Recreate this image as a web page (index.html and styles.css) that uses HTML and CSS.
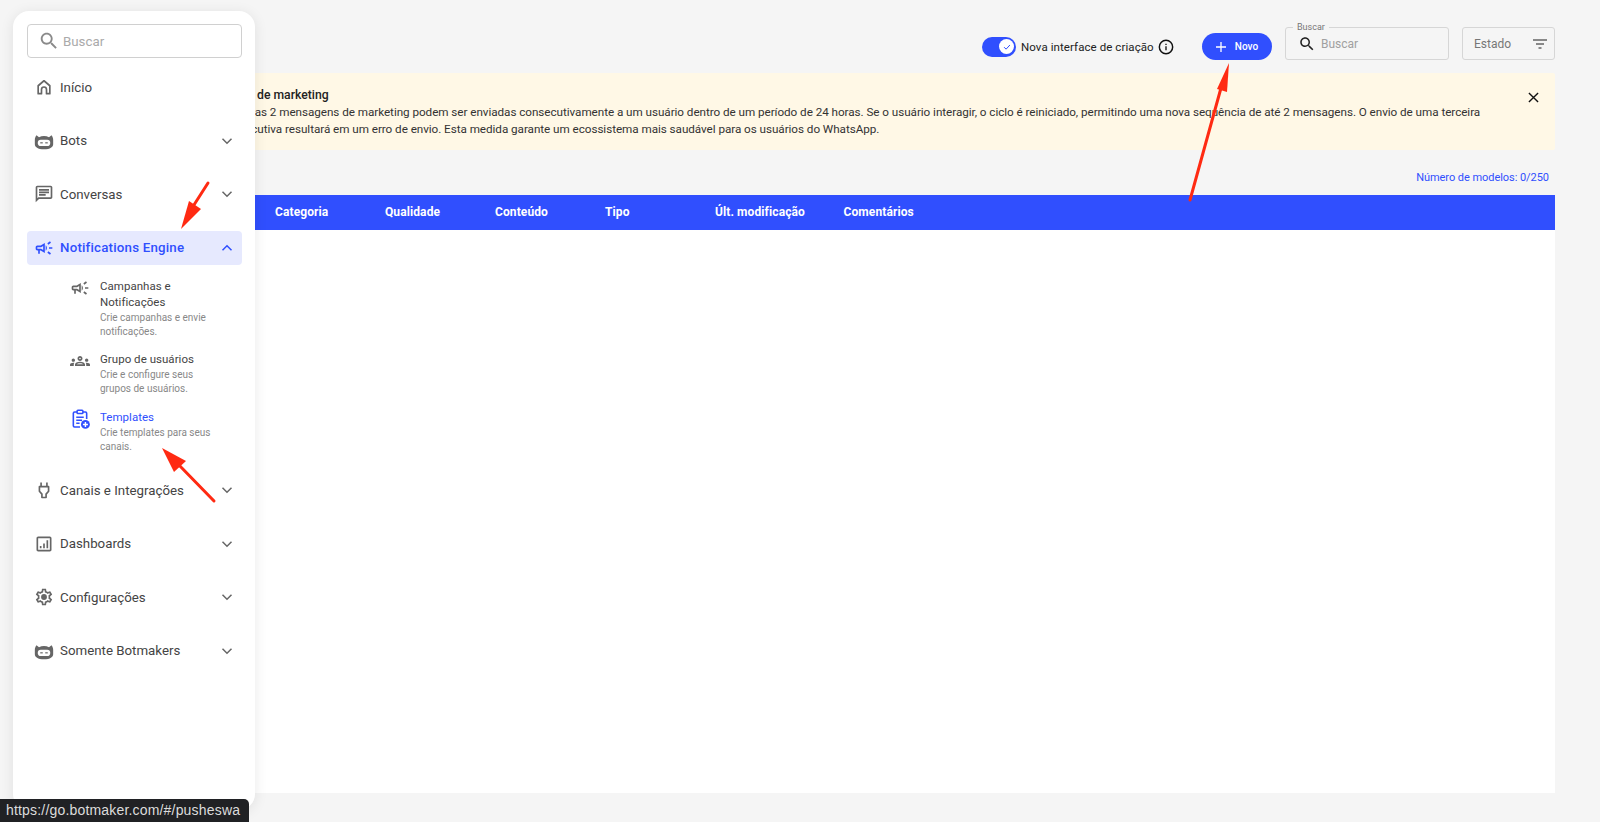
FILE: index.html
```html
<!DOCTYPE html>
<html lang="pt">
<head>
<meta charset="utf-8">
<title>Templates</title>
<link rel="stylesheet" href="styles.css">
</head>
<body>
<svg class="sprite" width="0" height="0" aria-hidden="true">
  <symbol id="i-bot" viewBox="0 0 24 24"><path d="M3 5l3 2.400C7.800 6.500 9.800 6 12 6s4.200.5 6 1.400L21 5c1.300 1.500 2 3.500 2 5.500V16c0 3.500-3.500 6-11 6S1 19.500 1 16v-5.500C1 8.500 1.700 6.500 3 5z" fill="currentColor"/><rect x="4.500" y="10.500" width="15" height="7.500" rx="3.700" fill="#fff"/><rect x="7.500" y="13.500" width="3" height="1.400" fill="currentColor"/><rect x="13.500" y="13.500" width="3" height="1.400" fill="currentColor"/></symbol>
  <symbol id="i-campaign" viewBox="0 0 24 24"><path fill="currentColor" d="M18 11v2h4v-2h-4zm-2 6.610c.96.71 2.210 1.650 3.200 2.390.4-.53.8-1.070 1.200-1.600-.99-.74-2.240-1.680-3.200-2.400-.4.54-.8 1.080-1.200 1.610zM20.400 5.600c-.4-.53-.8-1.070-1.200-1.600-.99.74-2.240 1.680-3.200 2.400.4.53.8 1.070 1.200 1.600.96-.72 2.210-1.650 3.200-2.400zM4 9c-1.100 0-2 .9-2 2v2c0 1.100.9 2 2 2h1v4h2v-4h1l5 3V6L8 9H4zm5.030 1.710L11 9.530v4.940l-1.970-1.180-.48-.29H4v-2h4.550l.48-.29zM15.500 12c0-1.330-.58-2.530-1.500-3.350v6.690c.92-.81 1.500-2.010 1.500-3.340z"/></symbol>
  <symbol id="i-chev" viewBox="0 0 24 24"><path d="M6 9l6 6 6-6" fill="none" stroke="currentColor" stroke-width="2"/></symbol>
  <symbol id="i-search" viewBox="0 0 24 24"><path fill="currentColor" d="M15.500 14h-.79l-.28-.27C15.410 12.590 16 11.110 16 9.500 16 5.910 13.090 3 9.500 3S3 5.910 3 9.500 5.910 16 9.500 16c1.610 0 3.090-.59 4.230-1.570l.27.28v.79l5 4.990L20.490 19l-4.990-5zm-6 0C7.010 14 5 11.990 5 9.500S7.010 5 9.500 5 14 7.010 14 9.500 11.990 14 9.500 14z"/></symbol>
</svg>

<div class="page">
  <main class="main">
    <div class="toolbar">
      <div class="toggle-group">
        <span class="toggle"><span class="knob"><svg viewBox="0 0 12 12" width="10" height="10"><path d="M2.500 6.200l2.400 2.400 4.600-5" fill="none" stroke="#304ffe" stroke-width="1.200"/></svg></span></span>
        <span class="toggle-label">Nova interface de criação</span>
        <svg class="info" viewBox="0 0 24 24" width="16" height="16"><circle cx="12" cy="12" r="10" fill="none" stroke="#111" stroke-width="2.200"/><path d="M11 11h2v6h-2zM11 7h2v2h-2z" fill="#111"/></svg>
      </div>
      <button class="btn-new"><svg viewBox="0 0 12 12" width="12" height="12"><path d="M6 1v10M1 6h10" stroke="#fff" stroke-width="1.300"/></svg><span>Novo</span></button>
      <div class="search-field">
        <span class="field-label">Buscar</span>
        <svg width="18" height="18" class="search-icon"><use href="#i-search"/></svg>
        <span class="field-ph">Buscar</span>
      </div>
      <div class="state-field">
        <span>Estado</span>
        <svg viewBox="0 0 16 12" width="16" height="12"><path d="M1 2h14M4 6h8M6.500 10h3" stroke="#666" stroke-width="1.300"/></svg>
      </div>
    </div>

    <section class="banner">
      <div class="banner-text">
        <strong>Limite de marketing</strong>
        <p>Todas as 2 mensagens de marketing podem ser enviadas consecutivamente a um usuário dentro de um período de 24 horas. Se o usuário interagir, o ciclo é reiniciado, permitindo uma nova sequência de até 2 mensagens. O envio de uma terceira<br>consecutiva resultará em um erro de envio. Esta medida garante um ecossistema mais saudável para os usuários do WhatsApp.</p>
      </div>
      <svg class="close" viewBox="0 0 12 12" width="11" height="11"><path d="M1 1l10 10M11 1L1 11" stroke="#111" stroke-width="1.500"/></svg>
    </section>

    <div class="count">Número de modelos: 0/250</div>

    <section class="table">
      <div class="thead">
        <span class="col">Categoria</span>
        <span class="col">Qualidade</span>
        <span class="col">Conteúdo</span>
        <span class="col">Tipo</span>
        <span class="col col-wide">Últ. modificação</span>
        <span class="col">Comentários</span>
      </div>
    </section>
  </main>
</div>

<aside class="sidebar">
  <div class="side-search">
    <svg width="22" height="22"><use href="#i-search"/></svg>
    <span>Buscar</span>
  </div>
  <nav class="nav">
    <a class="item">
      <svg class="ico" viewBox="0 0 24 24"><path d="M5 10.500L12 4.500l7 6V20H15v-5a3 3 0 0 0-6 0v5H5z" fill="none" stroke="currentColor" stroke-width="2" stroke-linejoin="round"/></svg>
      <span class="label">Início</span>
    </a>
    <a class="item">
      <svg class="ico"><use href="#i-bot"/></svg>
      <span class="label">Bots</span>
      <svg class="chev"><use href="#i-chev"/></svg>
    </a>
    <a class="item">
      <svg class="ico" viewBox="0 0 24 24"><path fill="currentColor" d="M4 4h16v12H5.170L4 17.170V4m0-2c-1.100 0-1.990.9-1.990 2L2 22l4-4h14c1.100 0 2-.9 2-2V4c0-1.100-.9-2-2-2H4zm2 10h8v2H6v-2zm0-3h12v2H6V9zm0-3h12v2H6V6z"/></svg>
      <span class="label">Conversas</span>
      <svg class="chev"><use href="#i-chev"/></svg>
    </a>
    <div class="group">
      <a class="item active">
        <svg class="ico"><use href="#i-campaign"/></svg>
        <span class="label">Notifications Engine</span>
        <svg class="chev up"><use href="#i-chev"/></svg>
      </a>
      <div class="sub">
        <a class="sub-item">
          <svg class="sub-ico"><use href="#i-campaign"/></svg>
          <div class="sub-text">
            <div class="sub-title">Campanhas e Notificações</div>
            <div class="sub-desc">Crie campanhas e envie notificações.</div>
          </div>
        </a>
        <a class="sub-item">
          <svg class="sub-ico" viewBox="0 0 24 24"><path fill="currentColor" d="M4 13c1.100 0 2-.9 2-2s-.9-2-2-2-2 .9-2 2 .9 2 2 2zm1.130 1.100c-.37-.06-.74-.1-1.130-.1-.99 0-1.930.21-2.780.58C.48 14.900 0 15.620 0 16.430V18h4.500v-1.610c0-.83.23-1.610.63-2.290zM20 13c1.100 0 2-.9 2-2s-.9-2-2-2-2 .9-2 2 .9 2 2 2zm4 3.430c0-.81-.48-1.530-1.220-1.850-.85-.37-1.790-.58-2.780-.58-.39 0-.76.04-1.130.1.4.68.63 1.460.63 2.290V18H24v-1.570zm-7.760-2.780c-1.170-.52-2.610-.9-4.240-.9-1.630 0-3.070.39-4.240.9C6.680 14.130 6 15.210 6 16.390V18h12v-1.610c0-1.180-.68-2.260-1.760-2.740zM8.070 16c.09-.23.13-.39.91-.69.97-.38 1.990-.56 3.020-.56s2.050.18 3.020.56c.77.3.81.46.91.69H8.070zM12 8c.55 0 1 .45 1 1s-.45 1-1 1-1-.45-1-1 .45-1 1-1m0-2c-1.660 0-3 1.340-3 3s1.340 3 3 3 3-1.340 3-3-1.340-3-3-3z"/></svg>
          <div class="sub-text">
            <div class="sub-title">Grupo de usuários</div>
            <div class="sub-desc">Crie e configure seus grupos de usuários.</div>
          </div>
        </a>
        <a class="sub-item sub-active">
          <svg class="sub-ico" viewBox="0 0 24 24"><path d="M9 3.500H5.500A1.500 1.500 0 0 0 4 5v15a1.500 1.500 0 0 0 1.500 1.500H12M15 3.500h3.500A1.500 1.500 0 0 1 20 5v7" fill="none" stroke="currentColor" stroke-width="1.900"/><rect x="8.500" y="1.500" width="7" height="4" rx="1" fill="none" stroke="currentColor" stroke-width="1.800"/><path d="M7.500 10h9M7.500 13.500h7M7.500 17h4" stroke="currentColor" stroke-width="1.800"/><circle cx="18.500" cy="18.500" r="5.300" fill="currentColor"/><path d="M18.500 15.500v6M15.500 18.500h6" stroke="#fff" stroke-width="1.700"/></svg>
          <div class="sub-text">
            <div class="sub-title">Templates</div>
            <div class="sub-desc">Crie templates para seus canais.</div>
          </div>
        </a>
      </div>
    </div>
    <a class="item">
      <svg class="ico" viewBox="0 0 24 24"><path d="M8.500 3v5M15.500 3v5M6.500 8h11v5.500L14.500 17v4h-5v-4l-3-3.500z" fill="none" stroke="currentColor" stroke-width="2" stroke-linejoin="round"/></svg>
      <span class="label">Canais e Integrações</span>
      <svg class="chev"><use href="#i-chev"/></svg>
    </a>
    <a class="item">
      <svg class="ico" viewBox="0 0 24 24"><path fill="currentColor" d="M19 3H5c-1.100 0-2 .9-2 2v14c0 1.100.9 2 2 2h14c1.100 0 2-.9 2-2V5c0-1.100-.9-2-2-2zm0 16H5V5h14v14zM7 14.500h2V17H7zm4-3h2V17h-2zm4-4h2V17h-2z"/></svg>
      <span class="label">Dashboards</span>
      <svg class="chev"><use href="#i-chev"/></svg>
    </a>
    <a class="item">
      <svg class="ico" viewBox="0 0 24 24"><path fill="currentColor" d="M19.430 12.980c.04-.32.07-.64.07-.98 0-.34-.03-.66-.07-.98l2.110-1.650c.19-.15.24-.42.12-.64l-2-3.460c-.09-.16-.26-.25-.44-.25-.06 0-.12.01-.17.03l-2.490 1c-.52-.4-1.080-.73-1.690-.98l-.38-2.650C14.460 2.180 14.250 2 14 2h-4c-.25 0-.46.18-.49.42l-.38 2.650c-.61.25-1.170.59-1.690.98l-2.490-1c-.06-.02-.12-.03-.18-.03-.17 0-.34.09-.43.25l-2 3.460c-.13.22-.07.49.12.64l2.110 1.650c-.04.32-.07.65-.07.98 0 .33.03.66.07.98l-2.110 1.650c-.19.15-.24.42-.12.64l2 3.460c.09.16.26.25.44.25.06 0 .12-.01.17-.03l2.490-1c.52.4 1.080.73 1.690.98l.38 2.650c.03.24.24.42.49.42h4c.25 0 .46-.18.49-.42l.38-2.650c.61-.25 1.170-.59 1.690-.98l2.490 1c.06.02.12.03.18.03.17 0 .34-.09.43-.25l2-3.460c.12-.22.07-.49-.12-.64l-2.110-1.650zm-1.980-1.710c.04.31.05.52.05.73 0 .21-.02.43-.05.73l-.14 1.130.89.7 1.080.84-.7 1.210-1.270-.51-1.040-.42-.9.68c-.43.32-.84.56-1.250.73l-1.060.43-.16 1.130-.2 1.350h-1.400l-.19-1.350-.16-1.130-1.060-.43c-.43-.18-.83-.41-1.230-.71l-.91-.7-1.060.43-1.270.51-.7-1.210 1.080-.84.89-.7-.14-1.130c-.03-.31-.05-.54-.05-.74s.02-.43.05-.73l.14-1.130-.89-.7-1.080-.84.7-1.210 1.270.51 1.040.42.9-.68c.43-.32.84-.56 1.250-.73l1.060-.43.16-1.130.2-1.350h1.390l.19 1.350.16 1.130 1.060.43c.43.18.83.41 1.230.71l.91.7 1.060-.43 1.270-.51.7 1.210-1.070.85-.89.7.14 1.130z"/><circle cx="12" cy="12" r="3.500" fill="currentColor"/></svg>
      <span class="label">Configurações</span>
      <svg class="chev"><use href="#i-chev"/></svg>
    </a>
    <a class="item">
      <svg class="ico"><use href="#i-bot"/></svg>
      <span class="label">Somente Botmakers</span>
      <svg class="chev"><use href="#i-chev"/></svg>
    </a>
  </nav>
</aside>

<div class="status-url">https://go.botmaker.com/#/pusheswa</div>

<svg class="arrows" viewBox="0 0 1600 822" width="1600" height="822" aria-hidden="true">
  <path d="M208 183L192 208" stroke="#ff2a12" stroke-width="3" stroke-linecap="round"/>
  <path d="M181 229L189 201L201 209z" fill="#ff2a12"/>
  <path d="M214 501L178 464" stroke="#ff2a12" stroke-width="3" stroke-linecap="round"/>
  <path d="M162 448L186 461L174 472z" fill="#ff2a12"/>
  <path d="M1190 200L1221 88" stroke="#ff2a12" stroke-width="3" stroke-linecap="round"/>
  <path d="M1229 63L1227 92L1217 89z" fill="#ff2a12"/>
</svg>
</body>
</html>
```

FILE: styles.css
```css
* { box-sizing: border-box; }

html, body {
  margin: 0;
  height: 822px;
  overflow: hidden;
  background: #f5f5f5;
  font-family: Roboto, "Liberation Sans", sans-serif;
  color: #333;
}

.sprite { position: absolute; }

.page {
  height: 822px;
  padding: 27px 45px 29px 64px;
}

.main {
  height: 100%;
  display: flex;
  flex-direction: column;
}

/* toolbar */
.toolbar {
  display: flex;
  align-items: flex-end;
  justify-content: flex-end;
  height: 33px;
  flex: none;
}

.toggle-group {
  height: 27px;
  display: flex;
  align-items: center;
}

.toggle {
  width: 34px;
  height: 20px;
  border-radius: 10px;
  background: #304ffe;
  display: flex;
  align-items: center;
  justify-content: flex-end;
  padding-right: 2px;
}

.knob {
  width: 15px;
  height: 15px;
  border-radius: 50%;
  background: #fff;
  display: flex;
  align-items: center;
  justify-content: center;
}

.toggle-label {
  margin-left: 5px;
  font-size: 11.500px;
  letter-spacing: .08px;
  color: #222;
  width: 132px;
  white-space: nowrap;
}

.info { margin-left: 5px; flex: none; }

.btn-new {
  margin-left: 28px;
  width: 70px;
  height: 27px;
  border: 0;
  border-radius: 14px;
  background: #304ffe;
  color: #fff;
  font: 500 10px Roboto, sans-serif;
  display: flex;
  align-items: center;
  justify-content: center;
  gap: 8px;
  padding: 0 1px 0 0;
}

.search-field {
  position: relative;
  margin-left: 13px;
  width: 164px;
  height: 33px;
  border: 1px solid #d6d6d6;
  border-radius: 3px;
  display: flex;
  align-items: center;
  padding-left: 12px;
  gap: 5px;
}

.field-label {
  position: absolute;
  left: 7px;
  top: -5px;
  padding: 0 4px;
  background: #f5f5f5;
  font-size: 9px;
  line-height: 9px;
  color: #777;
}

.search-icon { color: #222; flex: none; }

.field-ph {
  font-size: 12px;
  color: #a0a0a0;
}

.state-field {
  margin-left: 13px;
  width: 93px;
  height: 33px;
  border: 1px solid #d6d6d6;
  border-radius: 3px;
  display: flex;
  align-items: center;
  justify-content: space-between;
  padding: 0 6px 0 11px;
  font-size: 12px;
  color: #777;
}

/* banner */
.banner {
  flex: none;
  margin-top: 13px;
  height: 77px;
  background: #fff8e6;
  border-radius: 2px;
  padding: 14px 16px 0 156px;
  display: flex;
  align-items: flex-start;
}

.banner-text {
  flex: 1;
  font-size: 11.700px;
  line-height: 17px;
  letter-spacing: -.045px;
  color: #333;
  white-space: nowrap;
}

.banner-text strong {
  display: block;
  font-size: 12.200px;
  font-weight: 500;
  letter-spacing: 0;
  color: #222;
}

.banner-text p { margin: 0; }

.close { margin: 5px 0 0 0; flex: none; }

.count {
  flex: none;
  height: 45px;
  padding: 21px 6px 0 0;
  text-align: right;
  font-size: 11px;
  line-height: 14px;
  letter-spacing: -.05px;
  color: #304ffe;
}

/* table */
.table {
  flex: 1;
  background: #fff;
}

.thead {
  height: 35px;
  background: #304ffe;
  padding: 0 0 2px 211px;
  display: flex;
  align-items: center;
  color: #fff;
  font-size: 12px;
  letter-spacing: .1px;
  font-weight: 700;
}

.col { width: 110px; flex: none; }
.col-wide { width: 128.500px; }

/* sidebar */
.sidebar {
  position: absolute;
  left: 13px;
  top: 11px;
  width: 242px;
  height: 799px;
  background: #fff;
  border-radius: 16px;
  box-shadow: 0 2px 14px rgba(0, 0, 0, .09);
  padding: 13px 13px 0 14px;
}

.side-search {
  height: 34px;
  border: 1px solid #d0d0d0;
  border-radius: 4px;
  display: flex;
  align-items: center;
  padding-left: 10px;
  gap: 3px;
  color: #8a8a8a;
}

.side-search svg { flex: none; }

.side-search span {
  font-size: 13.300px;
  color: #aaa;
}

.nav {
  margin-top: 12px;
  display: flex;
  flex-direction: column;
  gap: 19.500px;
}

.item {
  height: 34px;
  display: flex;
  align-items: center;
  padding: 0 2px 0 6.500px;
  border-radius: 4px;
  color: #666;
}

.ico {
  width: 20px;
  height: 20px;
  flex: none;
}

.label {
  margin-left: 6.500px;
  flex: 1;
  font-size: 13.300px;
  color: #444;
}

.chev {
  width: 18px;
  height: 18px;
  flex: none;
  color: #666;
  margin-right: 4px;
}

.chev.up { transform: rotate(180deg); }

.item.active { background: #e6e9fe; color: #304ffe; }
.item.active .label { color: #304ffe; font-weight: 500; letter-spacing: .2px; }
.item.active .chev { color: #304ffe; }

.sub {
  padding: 13px 0 0 43px;
  display: flex;
  flex-direction: column;
  gap: 12.500px;
}

.sub-item {
  display: flex;
  color: #666;
}

.sub-ico {
  width: 20px;
  height: 20px;
  flex: none;
}

.sub-text {
  margin-left: 10px;
  width: 125px;
}

.sub-title {
  font-size: 11.500px;
  line-height: 16px;
  letter-spacing: .03px;
  color: #444;
}

.sub-desc {
  margin-top: 1px;
  font-size: 10px;
  line-height: 14px;
  color: #888;
}

.sub-active { color: #304ffe; }
.sub-active .sub-title { color: #304ffe; }

/* browser status url */
.status-url {
  position: absolute;
  left: 0;
  top: 799px;
  width: 249px;
  height: 23px;
  background: #202124;
  border-radius: 0 5px 0 0;
  color: #dcdcdc;
  font: 14px/22px "Liberation Sans", Arial, sans-serif;
  letter-spacing: .18px;
  padding-left: 6px;
  white-space: nowrap;
}

/* red annotations */
.arrows {
  position: absolute;
  left: 0;
  top: 0;
  pointer-events: none;
}
```
